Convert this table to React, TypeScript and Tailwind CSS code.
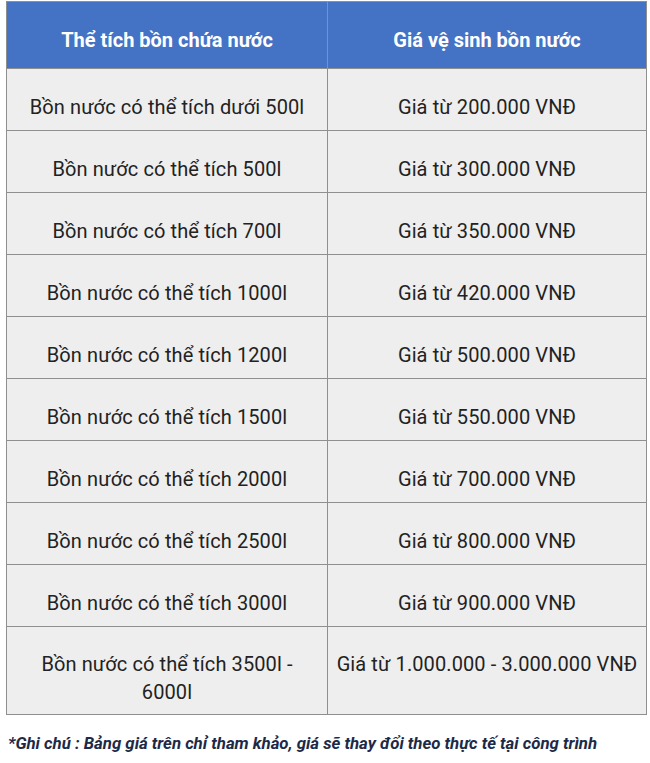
import React from "react";

const rows: [string, string][] = [
  ["Bồn nước có thể tích dưới 500l", "Giá từ 200.000 VNĐ"],
  ["Bồn nước có thể tích 500l", "Giá từ 300.000 VNĐ"],
  ["Bồn nước có thể tích 700l", "Giá từ 350.000 VNĐ"],
  ["Bồn nước có thể tích 1000l", "Giá từ 420.000 VNĐ"],
  ["Bồn nước có thể tích 1200l", "Giá từ 500.000 VNĐ"],
  ["Bồn nước có thể tích 1500l", "Giá từ 550.000 VNĐ"],
  ["Bồn nước có thể tích 2000l", "Giá từ 700.000 VNĐ"],
  ["Bồn nước có thể tích 2500l", "Giá từ 800.000 VNĐ"],
  ["Bồn nước có thể tích 3000l", "Giá từ 900.000 VNĐ"],
  ["Bồn nước có thể tích 3500l - 6000l", "Giá từ 1.000.000 - 3.000.000 VNĐ"],
];

export default function App() {
  return (
    <div className="w-[650px] h-[763px] bg-white pt-[1px] pl-[6px]" style={{ fontFamily: "Roboto, 'Noto Sans', sans-serif" }}>
      <table className="border-collapse w-[640px] table-fixed">
        <colgroup>
          <col className="w-[321px]" />
          <col className="w-[319px]" />
        </colgroup>
        <thead>
          <tr>
            <th className="bg-[#4472c4] border border-[#8f8f8f] text-white font-bold text-[20px] leading-[28px] pt-[24px] pb-[14px] align-top text-center">
              Thể tích bồn chứa nước
            </th>
            <th className="bg-[#4472c4] border border-[#8f8f8f] text-white font-bold text-[20px] leading-[28px] pt-[24px] pb-[14px] align-top text-center">
              Giá vệ sinh bồn nước
            </th>
          </tr>
        </thead>
        <tbody>
          {rows.map(([a, b], i) => {
            const last = i === rows.length - 1;
            return (
              <tr key={i}>
                <td className={last
                  ? "bg-[#eeeeee] border border-[#8f8f8f] text-[#222222] text-[20px] tracking-[0.1px] leading-[28px] pt-[23px] pb-[8px] px-[12px] align-top text-center"
                  : "bg-[#eeeeee] border border-[#8f8f8f] text-[#222222] text-[20px] tracking-[0.1px] leading-[28px] pt-[24px] pb-[9px] px-[12px] align-top text-center"}>
                  {a}
                </td>
                <td className={last
                  ? "bg-[#eeeeee] border border-[#8f8f8f] text-[#222222] text-[20px] tracking-[0.1px] leading-[28px] pt-[23px] pb-[8px] px-[4px] align-top text-center"
                  : "bg-[#eeeeee] border border-[#8f8f8f] text-[#222222] text-[20px] tracking-[0.1px] leading-[28px] pt-[24px] pb-[9px] px-[4px] align-top text-center"}>
                  {b}
                </td>
              </tr>
            );
          })}
        </tbody>
      </table>
      <p className="mt-[16px] ml-[2px] text-[16.8px] leading-[24px] font-bold italic text-[#1c2a48]">
        *Ghi chú : Bảng giá trên chỉ tham khảo, giá sẽ thay đổi theo thực tế tại công trình
      </p>
    </div>
  );
}
